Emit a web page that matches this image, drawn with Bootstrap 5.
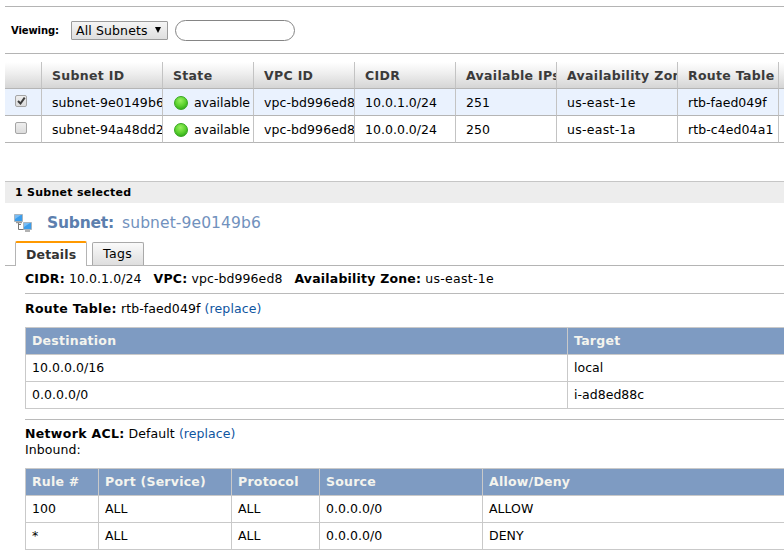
<!DOCTYPE html>
<html lang="en">
<head>
<meta charset="utf-8">
<title>Subnets</title>
<link rel="stylesheet" href="https://cdn.jsdelivr.net/npm/bootstrap@5.3.0/dist/css/bootstrap.min.css">
<style>
body{font:12.5px/16px "DejaVu Sans",sans-serif;color:#000;background:#fff;letter-spacing:.08px;overflow:hidden}
b,th{letter-spacing:.32px}
.console{width:795px;padding:6px 0 0 5px}
.filter{height:48px;border-top:1px solid #b4b4b4;border-bottom:1px solid #b4b4b4;padding-left:6px}
.filter-label{font-size:10px;width:60px;letter-spacing:-.1px;padding-top:2px}
.picker{width:97px;height:19px;border:1px solid #9b9b9b;border-radius:1px;background:linear-gradient(#f5f5f5,#dedede);padding:0 5px 0 4px;line-height:17px;letter-spacing:.12px}
.search{width:120px;height:21px;border:1px solid #858585;border-radius:11px;margin-left:7px;padding:0 8px}
.grid-table,.data{table-layout:fixed;border-collapse:separate;border-spacing:0;margin:0}
.grid-table{width:790px;margin-top:8px}
.grid-table th,.grid-table td{height:27px;padding:2px 0 0 10px;border-right:1px solid #c3c3c3;border-bottom:1px solid #b5b5b5;white-space:nowrap;overflow:hidden;vertical-align:middle}
.grid-table th{background:linear-gradient(#fff,#f2f2f2 35%,#d5d5d5);color:#3b3b3b}
.grid-table .picked td{background:#eaf2fe}
.grid-table .num{letter-spacing:.02px}
.zone{letter-spacing:.3px}
.tick{display:block;width:12px;height:12px;border:1px solid #a5a5a5;border-radius:2px;background:linear-gradient(#eee,#dcdcdc);margin-top:-4px}
.orb{width:14px;height:14px;border-radius:50%;background:radial-gradient(circle at 45% 30%,#98f060,#5bd12e 50%,#239b16 95%);border:1px solid #35a61d;margin:0 6px 0 1px}
.avail{letter-spacing:-.05px}
.selected-bar{height:22px;margin-top:38px;background:#ededed;border-top:1px solid #c6c6c6;padding-left:10px;font-size:11px;line-height:21px}
.selected-bar b{letter-spacing:.27px}
.title-row{height:38px;padding:2px 0 0 9px;color:#5c7fae;font-size:15.5px}
.title-row b{letter-spacing:-.2px;margin:0 8px 0 14px}
.title-row .value{color:#7191bd;font-size:15.5px;letter-spacing:.1px}
.tabs{height:25px;border-bottom:1px solid #b4b4b4;padding-left:10px}
.tab-on{width:72px;height:25px;border:1px solid #b4b4b4;border-top:2px solid #f90;border-bottom:0;background:#fff;color:#333;margin-bottom:-1px;padding-left:10px;line-height:24px;border-radius:2px 2px 0 0}
.tab-on b{letter-spacing:.15px}
.tab-off{width:52px;height:23px;margin-left:5px;border:1px solid #a9a9a9;border-bottom:0;border-radius:2px 2px 0 0;background:linear-gradient(#fafafa,#dedede);padding-left:10px;line-height:22px;letter-spacing:.4px}
.pane{margin-left:20px}
.line{height:1px;background:#bababa}
.pane a{color:#0f559f;text-decoration:none}
.summary{height:27px;line-height:26px;gap:12px;letter-spacing:.08px}
.summary b{letter-spacing:.2px}
.route{height:33px;padding-top:7px;letter-spacing:.1px}
.acl-line{margin-top:10px}
.acl{padding:6px 0 10px}
.data{width:790px}
.data th,.data td{height:27px;padding:0 0 0 6px;border-right:1px solid #c9c9c9;border-bottom:1px solid #c9c9c9;vertical-align:middle}
.data tr>:first-child{border-left:1px solid #c9c9c9}
.data th{background:#7e9bc2;color:#f4f4ee;letter-spacing:.24px}
.data td{letter-spacing:.03px}
.data thead th{height:28px;border-top:1px solid #c9c9c9}
</style>
<script src="https://cdn.jsdelivr.net/npm/bootstrap@5.3.0/dist/js/bootstrap.bundle.min.js"></script>
</head>
<body>
<main class="console">
<div class="filter d-flex align-items-center"><b class="filter-label">Viewing:</b>
<div class="picker d-flex justify-content-between" role="button"><span>All Subnets</span><svg width="8" height="17" viewBox="0 0 8 17"><path d="M1 5h6L4 11z" fill="#000"/></svg></div>
<input class="search" type="text" aria-label="Search subnets"></div>
<table class="grid-table">
<colgroup><col style="width:37px"><col style="width:121px"><col style="width:91px"><col style="width:101px"><col style="width:101px"><col style="width:101px"><col style="width:121px"><col style="width:101px"><col></colgroup>
<thead><tr><th></th><th>Subnet ID</th><th>State</th><th>VPC ID</th><th>CIDR</th><th>Available IPs</th><th>Availability Zone</th><th>Route Table</th><th></th></tr></thead>
<tbody>
<tr class="picked"><td><span class="tick"><svg class="d-block" width="10" height="10" viewBox="0 0 10 10"><path d="M2 5l2.5 2.5L8.7 1.6" fill="none" stroke="#3c3c3c" stroke-width="2"/></svg></span></td><td>subnet-9e0149b6</td><td><div class="avail d-flex align-items-center"><span class="orb flex-shrink-0"></span>available</div></td><td>vpc-bd996ed8</td><td class="num">10.0.1.0/24</td><td class="num">251</td><td class="zone">us-east-1e</td><td class="num">rtb-faed049f</td><td></td></tr>
<tr><td><span class="tick"></span></td><td>subnet-94a48dd2</td><td><div class="avail d-flex align-items-center"><span class="orb flex-shrink-0"></span>available</div></td><td>vpc-bd996ed8</td><td class="num">10.0.0.0/24</td><td class="num">250</td><td class="zone">us-east-1a</td><td>rtb-c4ed04a1</td><td></td></tr>
</tbody></table>
<div class="selected-bar"><b>1 Subnet selected</b></div>
<div class="title-row d-flex align-items-center">
<svg width="19" height="19" viewBox="0 0 19 19"><path d="M4.500 8v7.500H11M4.500 10.500H7" fill="none" stroke="#777"/><path d="M.5.500h8v7h-8zM9.500 8.500h8v7h-8z" fill="#3b9deb" stroke="#a9b4bd"/><path d="M1 1h6L1 5zM10 9h6l-6 4z" fill="#79bdf5"/><path d="M2 8.500h6M11 17h5" stroke="#999" stroke-width="1.500"/></svg>
<b>Subnet:</b><span class="value">subnet-9e0149b6</span></div>
<div class="tabs d-flex align-items-end"><div class="tab-on"><b>Details</b></div><div class="tab-off">Tags</div></div>
<section class="pane">
<div class="summary d-flex"><span><b>CIDR:</b> 10.0.1.0/24</span><span><b>VPC:</b> vpc-bd996ed8</span><span><b>Availability Zone:</b> <span class="zone">us-east-1e</span></span></div>
<div class="line"></div>
<div class="route"><b>Route Table:</b> rtb-faed049f <a href="#">(replace)</a></div>
<table class="data"><colgroup><col style="width:543px"><col></colgroup>
<thead><tr><th>Destination</th><th>Target</th></tr></thead>
<tbody><tr><td>10.0.0.0/16</td><td>local</td></tr><tr><td>0.0.0.0/0</td><td>i-ad8ed88c</td></tr></tbody></table>
<div class="line acl-line"></div>
<div class="acl"><b>Network ACL:</b> Default <a href="#">(replace)</a><br>Inbound:</div>
<table class="data"><colgroup><col style="width:74px"><col style="width:133px"><col style="width:88px"><col style="width:163px"><col></colgroup>
<thead><tr><th>Rule #</th><th>Port (Service)</th><th>Protocol</th><th>Source</th><th>Allow/Deny</th></tr></thead>
<tbody><tr><td>100</td><td>ALL</td><td>ALL</td><td>0.0.0.0/0</td><td>ALLOW</td></tr><tr><td>*</td><td>ALL</td><td>ALL</td><td>0.0.0.0/0</td><td>DENY</td></tr></tbody></table>
</section>
</main>
</body>
</html>
